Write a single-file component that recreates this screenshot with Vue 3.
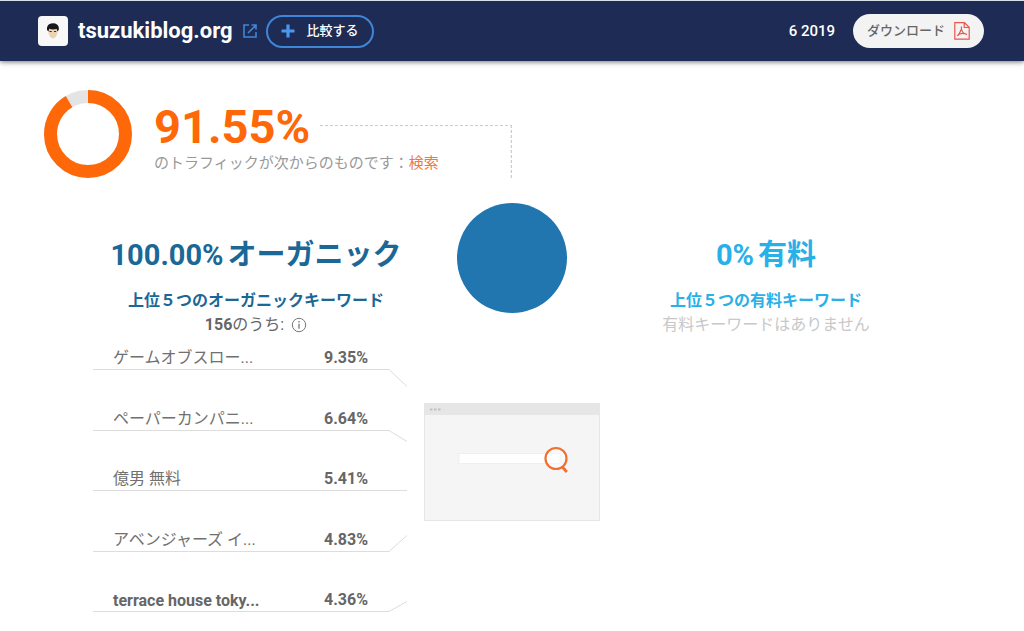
<script setup>
const keywords = [
  { name: 'ゲームオブスロー...', share: '9.35%', drop: 17 },
  { name: 'ペーパーカンパニ...', share: '6.64%', drop: 11 },
  { name: '億男 無料', share: '5.41%', drop: 0 },
  { name: 'アベンジャーズ イ...', share: '4.83%', drop: -16 },
  { name: 'terrace house toky...', share: '4.36%', drop: -10, latin: true }
]
</script>

<template>
  <div class="page">
    <header class="bar">
      <svg class="favicon" viewBox="0 0 30 30" aria-hidden="true">
        <rect width="30" height="30" rx="4" fill="#f8f8f8" />
        <path d="M10 13h10l-.6 4.500q-1.400 4.500-4.400 5-3-.5-4.400-5z" fill="#ecd2b4" />
        <path d="M9 14q-.6-5.500 4-6.500 3.500-1 6 1 2.400 1.500 1.700 5.500l-1.200 1.500-.8-2.500q-4 1-7.500-.2l-.7 2.700z" fill="#17181a" />
        <path d="M11.500 15.500h2.200M16 15.500h2.200" stroke="#3a2c24" stroke-width="1" />
      </svg>
      <h1 class="site">tsuzukiblog.org</h1>
      <a class="open" href="#" aria-label="tsuzukiblog.org">
        <svg viewBox="0 0 16 16" width="16" height="16" fill="none" stroke="#3f86d8" stroke-width="1.600">
          <path d="M7 2H2v12h12V9M9.500 2H14v4.500M14 2L6 10" />
        </svg>
      </a>
      <button class="compare" type="button">
        <svg viewBox="0 0 14 14" width="14" height="14" aria-hidden="true">
          <path d="M7 .5v13M.5 7h13" stroke="#4a98ee" stroke-width="3.200" />
        </svg>
        <span>比較する</span>
      </button>
      <span class="date">6 2019</span>
      <button class="download" type="button">
        <span>ダウンロード</span>
        <svg viewBox="0 0 16 18" width="16" height="18" fill="none" stroke="#e8564d" aria-hidden="true">
          <path d="M.8 .7h9.700l4.700 4.500v12H.8zM10.200 .9v4.600h4.800" stroke-width="1.200" />
          <path d="M7 4.500c1.200 1.200.2 5-3.800 9.500M7.300 5.500c.2 4 2.300 6.500 5.700 7M3.200 14c2.200-2.500 5.500-3.500 9.800-1.500" stroke-width="1.100" />
        </svg>
      </button>
    </header>

    <main>
      <section class="summary">
        <svg class="donut" viewBox="0 0 88 88" aria-hidden="true">
          <circle cx="44" cy="44" r="37.500" fill="none" stroke="#e4e4e4" stroke-width="13" />
          <circle cx="44" cy="44" r="37.500" fill="none" stroke="#ff6808" stroke-width="13" pathLength="100" stroke-dasharray="91.550 8.450" transform="rotate(-90 44 44)" />
        </svg>
        <div class="figure">
          <strong class="percent">91.55%</strong>
          <svg class="connector" aria-hidden="true">
            <line x1="0" y1="0.500" x2="100%" y2="0.500" />
            <line x1="100%" y1="0" x2="100%" y2="100%" class="down" />
          </svg>
          <p class="source">のトラフィックが次からのものです：<span>検索</span></p>
        </div>
      </section>

      <div class="columns">
        <section class="organic">
          <h2><span>100.00%</span>オーガニック</h2>
          <h3>上位５つのオーガニックキーワード</h3>
          <p class="count">
            <span><b>156</b>のうち:</span>
            <svg viewBox="0 0 16 16" width="16" height="16" fill="none" stroke="#777" aria-hidden="true">
              <circle cx="8" cy="8" r="6.700" />
              <path d="M8 6.800v5M8 4v1.500" stroke-width="1.300" />
            </svg>
          </p>
          <table>
            <tbody>
              <tr v-for="k in keywords" :key="k.share">
                <td class="name" :class="{ latin: k.latin }">{{ k.name }}</td>
                <td class="share">{{ k.share }}</td>
                <td class="tail">
                  <svg viewBox="0 0 18 1" width="18" height="1" aria-hidden="true">
                    <line x1="0" y1="0.500" x2="18" :y2="k.drop + 0.5" />
                  </svg>
                </td>
              </tr>
            </tbody>
          </table>
        </section>

        <div class="center">
          <div class="disc"></div>
          <svg class="browser" viewBox="0 0 176 118" aria-hidden="true">
            <rect x=".5" y=".5" width="175" height="117" fill="#f5f5f5" stroke="#e6e6e6" />
            <rect width="176" height="12" fill="#e6e6e6" />
            <path d="M6 5.500h2.500v2H6zM10 5.500h2.500v2H10zM14 5.500h2.500v2H14z" fill="#c0c0c0" />
            <rect x="35" y="50.500" width="101" height="10" fill="#fff" stroke="#e8e8e8" stroke-width=".6" />
            <circle cx="132" cy="55.500" r="10.500" fill="#fff" fill-opacity=".4" stroke="#f07030" stroke-width="2.200" />
            <path d="M138 63.500l4.800 5.500" stroke="#f07030" stroke-width="2.800" />
          </svg>
        </div>

        <section class="paid">
          <h2><span>0%</span>有料</h2>
          <h3>上位５つの有料キーワード</h3>
          <p class="none">有料キーワードはありません</p>
        </section>
      </div>
    </main>
  </div>
</template>

<style>
body {
  margin: 0;
  background: #fff;
}
</style>

<style scoped>
.page {
  font-family: Roboto, "Noto Sans CJK JP", sans-serif;
  font-size: 16px;
  color: #666;
}
h1, h2, h3, p {
  margin: 0;
}
button {
  font-family: inherit;
  cursor: pointer;
}
.bar {
  box-sizing: border-box;
  height: 61px;
  padding: 0 40px 0 38px;
  display: flex;
  align-items: center;
  background: #1e2b55;
  border-top: 1px solid #d5e0e8;
  box-shadow: 0 1px 5px rgba(0, 0, 0, 0.55);
}
.favicon {
  width: 30px;
  height: 30px;
}
.site {
  margin-left: 10px;
  font-size: 22px;
  line-height: 28px;
  font-weight: 700;
  color: #fff;
}
.open {
  display: flex;
  margin-left: 9px;
}
.compare {
  box-sizing: border-box;
  height: 33px;
  margin-left: 8px;
  padding: 0 13px;
  display: flex;
  align-items: center;
  gap: 12px;
  border: 2px solid #3f86d8;
  border-radius: 17px;
  background: transparent;
  color: #fff;
  font-size: 13px;
  line-height: 16px;
  font-weight: 500;
}
.date {
  margin-left: auto;
  color: #fff;
  font-size: 15px;
  font-weight: 500;
}
.download {
  height: 34px;
  margin-left: 18px;
  padding: 0 14px;
  display: flex;
  align-items: center;
  gap: 9px;
  border: 0;
  border-radius: 17px;
  background: #f3f3f3;
  color: #666;
  font-size: 13px;
  line-height: 16px;
  font-weight: 500;
}
.summary {
  box-sizing: border-box;
  width: 50%;
  padding: 29px 0 0 44px;
  display: flex;
  gap: 22px;
}
.donut {
  width: 88px;
  height: 88px;
  flex: none;
}
.figure {
  flex: 1;
  display: grid;
  grid-template-columns: auto 1fr;
  grid-template-rows: 61px 28px;
  column-gap: 10px;
}
.percent {
  grid-area: 1 / 1;
  padding-top: 9px;
  font-size: 47px;
  line-height: 56px;
  font-weight: 700;
  color: #ff6808;
}
.connector {
  grid-area: 1 / 2 / 3 / 3;
  width: 100%;
  height: 54px;
  margin-top: 35px;
}
.connector line {
  stroke: #ccc;
  stroke-width: 1;
  stroke-dasharray: 3 2;
}
.connector .down {
  stroke-width: 2;
}
.source {
  grid-area: 2 / 1 / 3 / 3;
  font-size: 15px;
  line-height: 24px;
  color: #999;
}
.source span {
  color: #f07838;
}
.columns {
  padding: 24px 93px 0;
  display: grid;
  grid-template-columns: 1fr 186px 1fr;
  text-align: center;
}
h2 {
  padding-top: 32px;
  display: flex;
  justify-content: center;
  align-items: baseline;
  gap: 4px;
  font-size: 29px;
  line-height: 40px;
  font-weight: 700;
}
h3 {
  margin-top: 14px;
  font-size: 16px;
  line-height: 24px;
  font-weight: 700;
}
.organic h2, .organic h3 {
  color: #1b6796;
}
.paid {
  padding-right: 4px;
}
.paid h2, .paid h3 {
  color: #28b0e8;
}
.count {
  display: flex;
  justify-content: center;
  align-items: center;
  gap: 7px;
  line-height: 24px;
}
.count b {
  font-weight: 700;
}
.none {
  line-height: 24px;
  color: #c8c8c8;
}
table {
  width: 314px;
  border-collapse: separate;
  border-spacing: 0;
  text-align: left;
}
td {
  padding: 0;
  height: 60px;
  box-sizing: border-box;
  vertical-align: bottom;
  border-bottom: 1px solid #ddd;
  line-height: 22px;
}
tr:nth-child(even) td {
  height: 61px;
}
tr:first-child td {
  height: 33px;
}
.name {
  padding-left: 20px;
  color: #707070;
}
.name.latin {
  font-weight: 700;
  line-height: 20px;
  color: #666;
}
.share {
  width: 65px;
  font-weight: 700;
}
.tail {
  width: 18px;
  border: 0;
  line-height: 0;
}
.tail svg {
  display: block;
  overflow: visible;
}
.tail line {
  stroke: #ddd;
}
.center {
  display: flex;
  flex-direction: column;
  align-items: center;
}
.disc {
  width: 110px;
  height: 110px;
  border-radius: 50%;
  background: #2176b0;
}
.browser {
  width: 176px;
  height: 118px;
  margin-top: 90px;
}
</style>
